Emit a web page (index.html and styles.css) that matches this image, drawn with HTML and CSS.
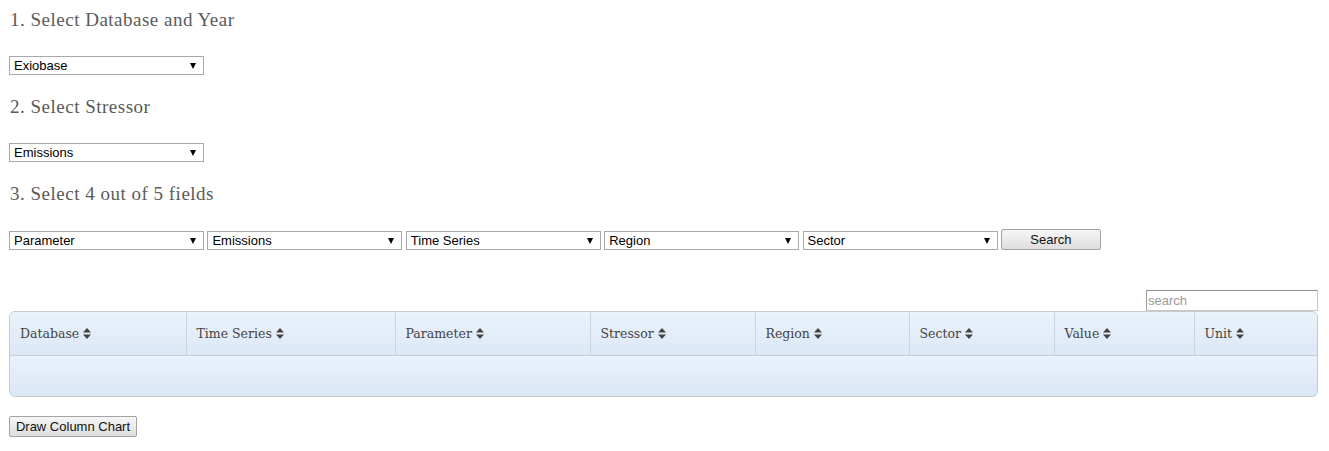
FILE: index.html
```html
<!DOCTYPE html>
<html>
<head>
<meta charset="utf-8">
<title>Stressor Query</title>
<link rel="stylesheet" href="styles.css">
</head>
<body>
<div class="page">
  <h3 class="step step-first">1. Select Database and Year</h3>
  <div class="field"><span class="sel"><select><option>Exiobase</option></select></span></div>

  <h3 class="step">2. Select Stressor</h3>
  <div class="field"><span class="sel"><select><option>Emissions</option></select></span></div>

  <h3 class="step">3. Select 4 out of 5 fields</h3>
  <div class="field-row">
    <span class="sel"><select><option>Parameter</option></select></span>
    <span class="sel"><select><option>Emissions</option></select></span>
    <span class="sel"><select><option>Time Series</option></select></span>
    <span class="sel"><select><option>Region</option></select></span>
    <span class="sel"><select><option>Sector</option></select></span>
    <button class="btn btn-search">Search</button>
  </div>

  <div class="search-bar"><input class="search-input" type="text" placeholder="search"></div>

  <div class="table-wrap">
    <table class="grid">
      <thead>
        <tr>
          <th class="c1">Database <svg class="sort" viewBox="0 0 8 11"><path d="M4 0 L8 4.5 H0 Z M0 6.5 H8 L4 11 Z"/></svg></th>
          <th class="c2">Time Series <svg class="sort" viewBox="0 0 8 11"><path d="M4 0 L8 4.5 H0 Z M0 6.5 H8 L4 11 Z"/></svg></th>
          <th class="c3">Parameter <svg class="sort" viewBox="0 0 8 11"><path d="M4 0 L8 4.5 H0 Z M0 6.5 H8 L4 11 Z"/></svg></th>
          <th class="c4">Stressor <svg class="sort" viewBox="0 0 8 11"><path d="M4 0 L8 4.5 H0 Z M0 6.5 H8 L4 11 Z"/></svg></th>
          <th class="c5">Region <svg class="sort" viewBox="0 0 8 11"><path d="M4 0 L8 4.5 H0 Z M0 6.5 H8 L4 11 Z"/></svg></th>
          <th class="c6">Sector <svg class="sort" viewBox="0 0 8 11"><path d="M4 0 L8 4.5 H0 Z M0 6.5 H8 L4 11 Z"/></svg></th>
          <th class="c7">Value <svg class="sort" viewBox="0 0 8 11"><path d="M4 0 L8 4.5 H0 Z M0 6.5 H8 L4 11 Z"/></svg></th>
          <th class="c8">Unit <svg class="sort" viewBox="0 0 8 11"><path d="M4 0 L8 4.5 H0 Z M0 6.5 H8 L4 11 Z"/></svg></th>
        </tr>
      </thead>
      <tbody>
        <tr class="empty-row"><td colspan="8"></td></tr>
      </tbody>
    </table>
  </div>

  <div class="actions"><button class="btn btn-chart">Draw Column Chart</button></div>
</div>
</body>
</html>
```

FILE: styles.css
```css
html, body {
  margin: 0;
  padding: 0;
  background: #fff;
}

.page {
  padding: 0 11px 0 9px;
  font-family: "Liberation Sans", Arial, sans-serif;
}

.step {
  margin: 22px 0 26px 1px;
  font-family: "Liberation Serif", "DejaVu Serif", serif;
  font-weight: normal;
  font-size: 19px;
  line-height: 20px;
  color: #5a5a5a;
  letter-spacing: 0.5px;
}

.step-first {
  margin-top: 10px;
}

.field {
  display: flex;
  height: 19px;
}

.field-row {
  display: flex;
  align-items: center;
  gap: 3.4px;
  height: 21px;
  margin-top: 25px;
}

.sel {
  position: relative;
  display: inline-block;
  width: 195px;
  height: 19px;
}

.sel select {
  appearance: none;
  -webkit-appearance: none;
  box-sizing: border-box;
  width: 195px;
  height: 19px;
  margin: 0;
  padding: 0 0 0 4px;
  border: 1px solid #a9a9a9;
  border-radius: 0;
  background: #fff;
  font-family: "Liberation Sans", Arial, sans-serif;
  font-size: 13px;
  color: #000;
}

.sel::after {
  content: "";
  position: absolute;
  right: 8px;
  top: 7px;
  width: 0;
  height: 0;
  border-left: 3.5px solid transparent;
  border-right: 3.5px solid transparent;
  border-top: 6px solid #000;
  pointer-events: none;
}

.btn {
  box-sizing: border-box;
  height: 21px;
  margin: 0;
  padding: 0;
  border: 1px solid #a3a3a3;
  border-radius: 2px;
  background: linear-gradient(#f6f6f6, #dedede);
  font-family: "Liberation Sans", Arial, sans-serif;
  font-size: 13px;
  color: #111;
  line-height: 18px;
  white-space: nowrap;
}

.btn-search {
  width: 100px;
  position: relative;
  top: -1px;
}

.btn-chart {
  width: 128px;
}

.search-bar {
  display: flex;
  justify-content: flex-end;
  margin-top: 39px;
}

.search-input {
  box-sizing: border-box;
  width: 172px;
  height: 21px;
  margin: 0;
  padding: 0 1px;
  border: 1px solid #c6c6c6;
  border-top-color: #8f8f8f;
  border-left-color: #a0a0a0;
  font-family: "Liberation Sans", Arial, sans-serif;
  font-size: 13px;
}

.search-input::placeholder {
  color: #9a9a9a;
}

.table-wrap {
  box-sizing: border-box;
  height: 86px;
  border: 1px solid #c9c9c9;
  border-radius: 6px;
  overflow: hidden;
  background: linear-gradient(#eaf2fb, #dbe7f6);
}

.grid {
  width: 100%;
  border-collapse: collapse;
  table-layout: fixed;
}

.grid th {
  box-sizing: border-box;
  height: 43px;
  padding: 1px 0 0 10px;
  text-align: left;
  font-family: "DejaVu Serif", serif;
  font-weight: normal;
  font-size: 12.5px;
  color: #444;
  border-right: 1px solid #cdd3da;
  border-bottom: 1px solid #c8ced6;
  background: linear-gradient(#eaf2fb, #dce8f6);
  white-space: nowrap;
}

.grid th:last-child {
  border-right: none;
}

.c1 { width: 176px; }
.c2 { width: 209px; }
.c3 { width: 195px; }
.c4 { width: 165px; }
.c5 { width: 154px; }
.c6 { width: 145px; }
.c7 { width: 140px; }

.sort {
  width: 8px;
  height: 11px;
  fill: #444;
  vertical-align: -1px;
}

.empty-row td {
  height: 41px;
  padding: 0;
  background: linear-gradient(#e9f1fb, #dbe7f6);
}

.actions {
  margin-top: 19px;
}
```
